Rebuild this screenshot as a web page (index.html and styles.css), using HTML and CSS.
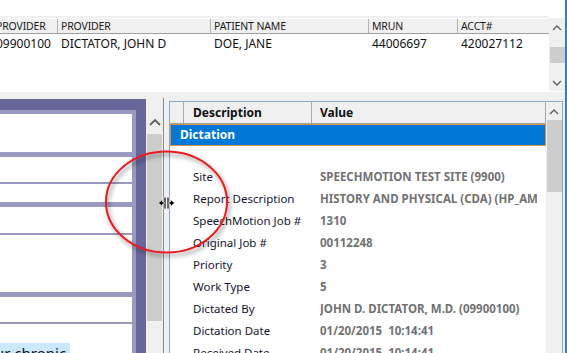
FILE: index.html
```html
<!DOCTYPE html>
<html>
<head>
<meta charset="utf-8">
<link rel="stylesheet" href="styles.css">
</head>
<body>
<div class="window">
  <div class="top">
    <div class="list">
      <div class="list-head">
        <div class="hc c0">PROVIDER</div>
        <div class="hc">PROVIDER</div>
        <div class="hc">PATIENT NAME</div>
        <div class="hc">MRUN</div>
        <div class="hc">ACCT#</div>
      </div>
      <div class="list-row">
        <div class="dc c0">09900100</div>
        <div class="dc">DICTATOR, JOHN D</div>
        <div class="dc">DOE, JANE</div>
        <div class="dc">44006697</div>
        <div class="dc">420027112</div>
      </div>
    </div>
    <div class="vscroll top-scroll">
      <svg class="chev" width="10" height="6" viewBox="0 0 10 6"><polyline points="1,5 5,1 9,5" fill="none" stroke="#606060" stroke-width="1.4"/></svg>
      <div class="thumb top-thumb"></div>
      <svg class="chev down" width="10" height="6" viewBox="0 0 10 6"><polyline points="1,1 5,5 9,1" fill="none" stroke="#606060" stroke-width="1.4"/></svg>
    </div>
  </div>
  <div class="lower">
    <div class="leftpane">
      <div class="stack">
        <div class="field f38"></div>
        <div class="field f25 gap5"></div>
        <div class="field f18 gap2"></div>
        <div class="field f26 gap5"></div>
        <div class="field f57 gap2"></div>
        <div class="field f25 gap5"></div>
        <div class="field last gap2"><span class="hl">ur chronic</span></div>
      </div>
    </div>
    <div class="vscroll left-scroll">
      <svg class="chev" width="12" height="7" viewBox="0 0 12 7"><polyline points="1,6 6,1 11,6" fill="none" stroke="#606060" stroke-width="1.8"/></svg>
      <div class="thumb left-thumb"></div>
    </div>
    <div class="splitter"></div>
    <div class="rightpane">
      <div class="grid">
        <div class="grid-head">
          <div class="gh exp"></div>
          <div class="gh desc">Description</div>
          <div class="gh val">Value</div>
        </div>
        <div class="category">Dictation</div>
        <div class="props">
          <div class="prop"><span class="pd">Site</span><span class="pv">SPEECHMOTION TEST SITE (9900)</span></div>
          <div class="prop"><span class="pd">Report Description</span><span class="pv">HISTORY AND PHYSICAL (CDA) (HP_AMB)</span></div>
          <div class="prop"><span class="pd">SpeechMotion Job #</span><span class="pv">1310</span></div>
          <div class="prop"><span class="pd">Original Job #</span><span class="pv">00112248</span></div>
          <div class="prop"><span class="pd">Priority</span><span class="pv">3</span></div>
          <div class="prop"><span class="pd">Work Type</span><span class="pv">5</span></div>
          <div class="prop"><span class="pd">Dictated By</span><span class="pv">JOHN D. DICTATOR, M.D. (09900100)</span></div>
          <div class="prop"><span class="pd">Dictation Date</span><span class="pv">01/20/2015  10:14:41</span></div>
          <div class="prop"><span class="pd">Received Date</span><span class="pv">01/20/2015  10:14:41</span></div>
        </div>
      </div>
      <div class="vscroll right-scroll">
        <svg class="chev" width="10" height="6" viewBox="0 0 10 6"><polyline points="1,5 5,1 9,5" fill="none" stroke="#606060" stroke-width="1.4"/></svg>
        <div class="thumb right-thumb"></div>
      </div>
    </div>
  </div>
  <svg class="annot" width="567" height="353" viewBox="0 0 567 353">
    <defs>
      <filter id="sh" x="-20%" y="-20%" width="140%" height="140%">
        <feDropShadow dx="2" dy="3" stdDeviation="2.2" flood-color="#000" flood-opacity="0.45"/>
      </filter>
    </defs>
    <ellipse cx="166.5" cy="202" rx="60.5" ry="50.5" fill="none" stroke="#ea1b23" stroke-width="2" filter="url(#sh)"/>
    <g class="cursor">
      <rect x="164" y="197" width="2" height="12" fill="#000" stroke="#fff" stroke-width="0.8"/>
      <rect x="167" y="197" width="2" height="12" fill="#000" stroke="#fff" stroke-width="0.8"/>
      <polygon points="158.5,203 162.5,199.5 162.5,202 164,202 164,204 162.5,204 162.5,206.5" fill="#000" stroke="#fff" stroke-width="0.6"/>
      <polygon points="174.5,203 170.5,199.5 170.5,202 169,202 169,204 170.5,204 170.5,206.5" fill="#000" stroke="#fff" stroke-width="0.6"/>
    </g>
  </svg>
</div>
</body>
</html>
```

FILE: styles.css
```css
html, body {
  margin: 0;
  padding: 0;
}

body {
  width: 567px;
  height: 353px;
  overflow: hidden;
  font-family: "Noto Sans", "DejaVu Sans", sans-serif;
  color: #1a1a1a;
}

.window {
  position: relative;
  width: 565px;
  height: 353px;
  border-right: 2px solid #2b7fd5;
  background: #f0f0f0;
  display: flex;
  flex-direction: column;
  overflow: hidden;
}

/* ---------- top list ---------- */
.top {
  height: 92px;
  flex: none;
  background: #fff;
  display: flex;
  padding-top: 16px;
  box-sizing: border-box;
}

.list {
  width: 549px;
  flex: none;
  border-top: 2px solid #f0f0f0;
  padding-top: 1px;
  background: #fff;
}

.list-head,
.list-row {
  display: grid;
  grid-template-columns: 58px 153px 158px 89px 91px;
}

.list-head {
  height: 14px;
  background: #f0f0f0;
  border-bottom: 1px solid #a0a0a0;
}

.hc {
  font-size: 10.5px;
  letter-spacing: -0.15px;
  line-height: 14px;
  padding-left: 3px;
  border-right: 1px solid #b4b4b4;
  white-space: nowrap;
  overflow: hidden;
  color: #1c1c1c;
}

.hc:last-child {
  border-right: none;
}

.list-row {
  height: 19px;
}

.dc {
  font-size: 12px;
  line-height: 19px;
  padding-left: 3px;
  white-space: nowrap;
  overflow: hidden;
  color: #101010;
}

.c0 {
  padding-left: 0;
  text-indent: -4px;
}

/* ---------- scrollbars ---------- */
.vscroll {
  flex: none;
  background: #f0f0f0;
  display: flex;
  flex-direction: column;
  align-items: center;
  box-sizing: border-box;
}

.chev {
  display: block;
  flex: none;
}

.thumb {
  background: #cdcdcd;
  flex: none;
}

.top-scroll {
  width: 16px;
  height: 73px;
  margin-top: 2px;
  padding-top: 7px;
}

.top-thumb {
  width: 15px;
  height: 16px;
  margin-top: 16px;
}

.chev.down {
  margin-top: 17px;
}

.left-scroll {
  width: 17px;
  padding-top: 27px;
}

.left-thumb {
  width: 15px;
  height: 187px;
  margin-top: 8px;
}

.right-scroll {
  width: 16px;
  padding-top: 7px;
}

.right-thumb {
  width: 15px;
  height: 72px;
  margin-top: 5px;
}

/* ---------- lower area ---------- */
.lower {
  flex: 1;
  display: flex;
  min-height: 0;
}

.leftpane {
  width: 146px;
  flex: none;
  margin-top: 7px;
  background: #67679b;
  padding: 11px 10px 0 0;
  box-sizing: border-box;
  overflow: hidden;
}

.stack {
  background: #9a9ac0;
  padding: 4px 4px 0 0;
  height: 100%;
  box-sizing: border-box;
  display: flex;
  flex-direction: column;
}

.field {
  background: #fff;
  flex: none;
}

.f38 { height: 38px; }
.f25 { height: 25px; }
.f18 { height: 18px; }
.f26 { height: 26px; }
.f57 { height: 57px; }
.gap5 { margin-top: 5px; }
.gap2 { margin-top: 2px; }

.field.last {
  flex: 1;
  padding-top: 19px;
  font-size: 15px;
  line-height: 20px;
  white-space: nowrap;
  overflow: hidden;
  text-indent: -5px;
  color: #111;
}

.hl {
  background: #cce8ff;
  padding-right: 4px;
}

.splitter {
  width: 6px;
  flex: none;
  margin-top: 6px;
  border-left: 1px solid #8a8a8a;
  box-sizing: border-box;
}

.rightpane {
  width: 394px;
  flex: none;
  margin-top: 9px;
  margin-right: 2px;
  border: 1px solid #8ea6c4;
  border-bottom: none;
  box-sizing: border-box;
  background: #fff;
  display: flex;
}

.grid {
  flex: 1;
  min-width: 0;
  display: flex;
  flex-direction: column;
}

.grid-head {
  display: flex;
  height: 21px;
  background: #f0f0f0;
  border-bottom: 1px solid #a0a0a0;
  flex: none;
}

.gh {
  font-size: 12px;
  font-weight: bold;
  line-height: 21px;
  color: #111;
  border-right: 1px solid #a8a8a8;
  box-sizing: border-box;
}

.gh.exp {
  width: 14px;
}

.gh.desc {
  width: 128px;
  padding-left: 9px;
}

.gh.val {
  flex: 1;
  padding-left: 8px;
}

.category {
  height: 22px;
  flex: none;
  box-sizing: border-box;
  background: #0078d7;
  border: 1px solid #e0903f;
  color: #fff;
  font-size: 12px;
  font-weight: bold;
  line-height: 20px;
  padding-left: 9px;
}

.props {
  padding-top: 20px;
}

.prop {
  display: flex;
  height: 22px;
  line-height: 22px;
  font-size: 11.5px;
  white-space: pre;
}

.pd {
  width: 150px;
  flex: none;
  padding-left: 23px;
  box-sizing: border-box;
  color: #15152e;
}

.pv {
  width: 217px;
  flex: none;
  overflow: hidden;
  font-weight: bold;
  color: #727272;
}

/* ---------- annotation overlay ---------- */
.annot {
  position: absolute;
  left: 0;
  top: 0;
  pointer-events: none;
}
```
